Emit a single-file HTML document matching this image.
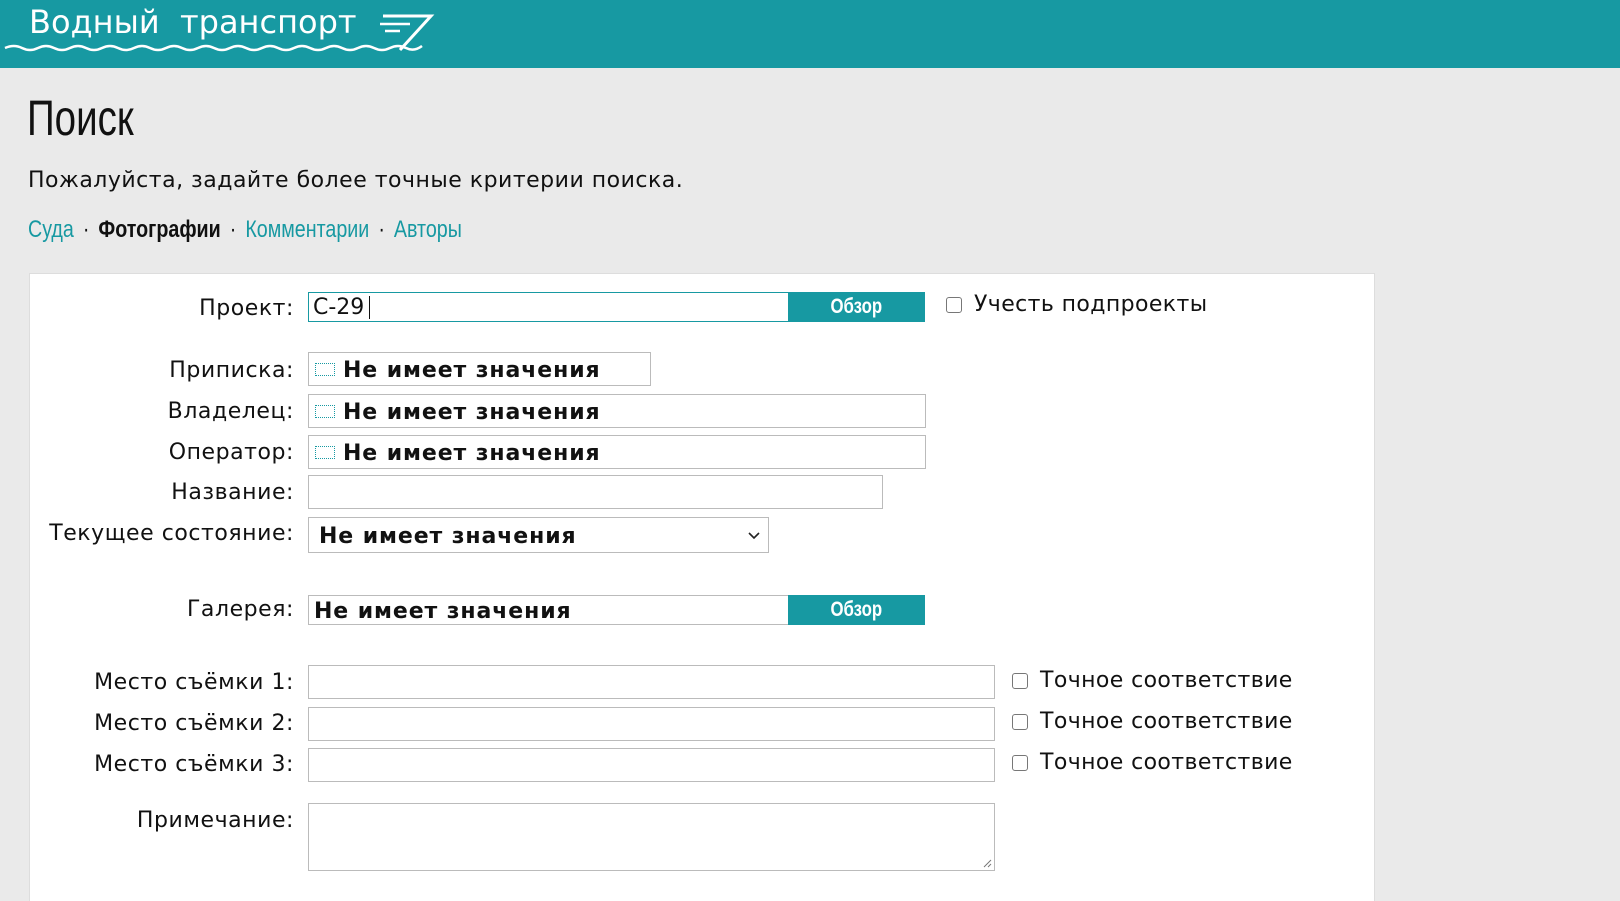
<!DOCTYPE html>
<html style="overflow:hidden;height:901px"><head><meta charset="utf-8"><style>
*{box-sizing:border-box;margin:0;padding:0}
body{width:1620px;height:901px;overflow:hidden;background:#eaeaea;font-family:"DejaVu Sans",sans-serif;color:#111;position:relative}
.hdr{position:absolute;left:0;top:0;width:1620px;height:68px;background:#1799a2}
.abs{position:absolute}
.title{left:27px;top:89px;font-family:"Liberation Sans",sans-serif;font-size:50px;transform:scaleX(.77);transform-origin:left top;color:#111}
.para{left:28px;top:168px;font-size:22px;letter-spacing:.5px}
.tabs{left:28px;top:216px;font-family:"Liberation Sans",sans-serif;font-size:24px;transform:scaleX(.82);transform-origin:left top;color:#1799a2;white-space:nowrap}
.tabs b{color:#111}
.tabs span.d{color:#111;margin:0 11px}
.panel{left:29px;top:273px;width:1346px;height:628px;background:#fff;border:1px solid #ddd;border-bottom:none}
.lbl{position:absolute;right:1326px;font-size:22px;white-space:nowrap;letter-spacing:.55px}
.box{position:absolute;left:308px;background:#fff;border:1px solid #bbb}
.val{font-weight:bold;font-size:22px;letter-spacing:.9px;position:absolute;top:5px;white-space:nowrap}
.ic{display:inline-block;width:20px;height:13px;border:1px dotted #1799a2;margin:0 8px 0 6px;vertical-align:1px}
.btn{position:absolute;background:#1799a2;color:#fff;font-family:"Liberation Sans",sans-serif;font-weight:bold;font-size:21px;text-align:center}
.btn span{display:inline-block;transform:scaleX(.8)}
.cb{position:absolute;width:16px;height:16px;border:1.5px solid #777;border-radius:3px;background:#fff}
.ct{position:absolute;font-size:22px;letter-spacing:.4px;white-space:nowrap}
</style></head><body>
<div class="hdr"></div>
<div class="abs" style="left:29px;top:3px;font-size:32px;color:#fff;font-family:'DejaVu Sans',sans-serif">Водный&nbsp;&nbsp;транспорт</div>
<svg class="abs" style="left:0;top:0" width="440" height="68">
<path d="M5 48 Q14 44 22 48 T38 48 T54 48 T70 48 T86 48 T102 48 T118 48 T134 48 T150 48 T166 48 T182 48 T198 48 T214 48 T230 48 T246 48 T262 48 T278 48 T294 48 T310 48 T326 48 T342 48 T358 48 T374 48 T390 48 T406 48 T422 46" stroke="#fff" stroke-width="2.5" fill="none"/>
<path d="M383 16 H431 L400 50" stroke="#fff" stroke-width="3" fill="none"/>
<path d="M380 24 H410 M385 31 H400" stroke="#fff" stroke-width="2.5" fill="none"/>
</svg>
<div class="abs title">Поиск</div>
<div class="abs para">Пожалуйста, задайте более точные критерии поиска.</div>
<div class="abs tabs">Суда<span class="d">·</span><b>Фотографии</b><span class="d">·</span>Комментарии<span class="d">·</span>Авторы</div>
<div class="abs panel"></div>

<div class="lbl" style="top:296px">Проект:</div>
<div class="box" style="top:292px;width:482px;height:30px;border-color:#1799a2;border-right:none"><span style="position:absolute;left:4px;top:2px;font-size:22px">С-29</span><span style="position:absolute;left:60px;top:3px;width:1px;height:23px;background:#111"></span></div>
<div class="btn" style="left:788px;top:292px;width:137px;height:30px;line-height:30px"><span>Обзор</span></div>
<div class="cb" style="left:946px;top:297px"></div>
<div class="ct" style="left:974px;top:292px">Учесть подпроекты</div>

<div class="lbl" style="top:358px">Приписка:</div>
<div class="box" style="top:352px;width:343px;height:34px"><div class="val"><span class="ic"></span>Не имеет значения</div></div>
<div class="lbl" style="top:399px">Владелец:</div>
<div class="box" style="top:394px;width:618px;height:34px"><div class="val"><span class="ic"></span>Не имеет значения</div></div>
<div class="lbl" style="top:440px">Оператор:</div>
<div class="box" style="top:435px;width:618px;height:34px"><div class="val"><span class="ic"></span>Не имеет значения</div></div>
<div class="lbl" style="top:480px">Название:</div>
<div class="box" style="top:475px;width:575px;height:34px"></div>
<div class="lbl" style="top:521px">Текущее состояние:</div>
<div class="box" style="top:517px;width:461px;height:36px"><div class="val" style="left:10px;top:6px">Не имеет значения</div><svg style="position:absolute;right:8px;top:14px" width="12" height="8"><path d="M1 1 L6 6 L11 1" stroke="#222" stroke-width="1.6" fill="none"/></svg></div>

<div class="lbl" style="top:597px">Галерея:</div>
<div class="box" style="top:595px;width:482px;height:30px;border-right:none"><div class="val" style="left:5px;top:3px">Не имеет значения</div></div>
<div class="btn" style="left:788px;top:595px;width:137px;height:30px;line-height:30px"><span>Обзор</span></div>

<div class="lbl" style="top:670px">Место съёмки 1:</div>
<div class="box" style="top:665px;width:687px;height:34px"></div>
<div class="cb" style="left:1012px;top:673px"></div><div class="ct" style="left:1040px;top:668px">Точное соответствие</div>
<div class="lbl" style="top:711px">Место съёмки 2:</div>
<div class="box" style="top:707px;width:687px;height:34px"></div>
<div class="cb" style="left:1012px;top:714px"></div><div class="ct" style="left:1040px;top:709px">Точное соответствие</div>
<div class="lbl" style="top:752px">Место съёмки 3:</div>
<div class="box" style="top:748px;width:687px;height:34px"></div>
<div class="cb" style="left:1012px;top:755px"></div><div class="ct" style="left:1040px;top:750px">Точное соответствие</div>
<div class="lbl" style="top:808px">Примечание:</div>
<div class="box" style="top:803px;width:687px;height:68px"><svg style="position:absolute;right:2px;bottom:2px" width="10" height="10"><path d="M9 2 L2 9 M9 6 L6 9" stroke="#777" stroke-width="1"/></svg></div>
</body></html>
